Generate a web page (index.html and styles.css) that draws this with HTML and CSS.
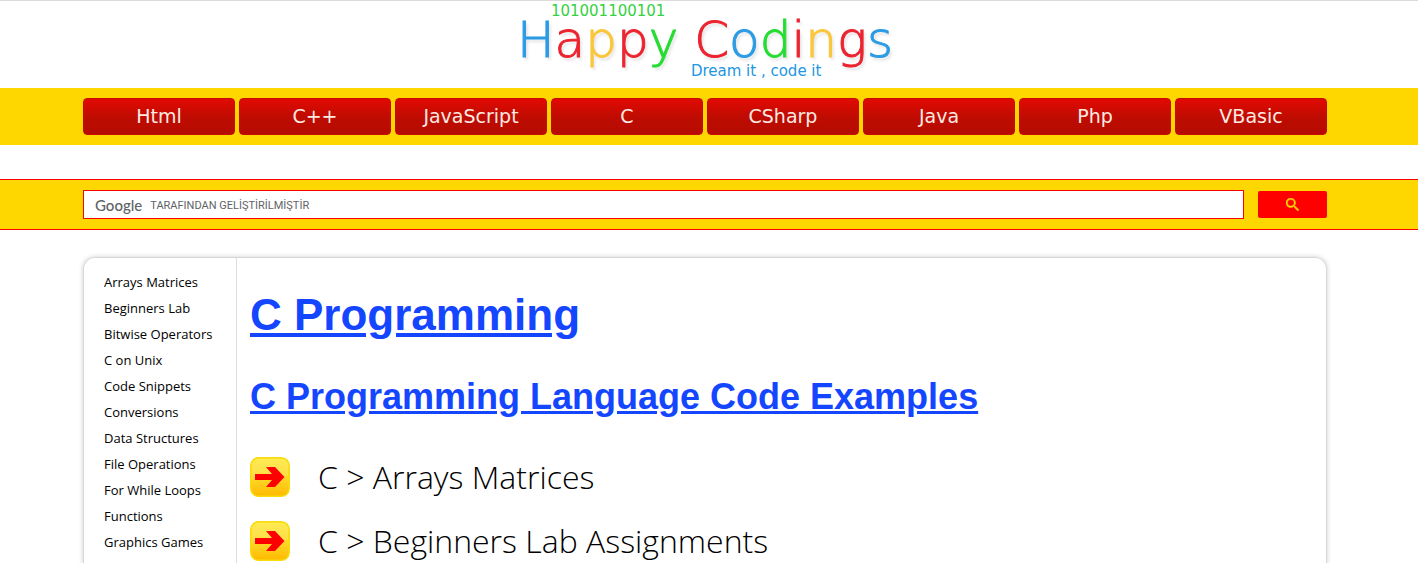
FILE: index.html
```html
<!DOCTYPE html>
<html lang="en">
<head>
<meta charset="utf-8">
<title>C Programming - Happy Codings</title>
<link rel="stylesheet" href="styles.css">
</head>
<body>
<header class="header">
  <a class="logo" href="#">
    <span class="logo-bits">101001100101</span>
    <span class="logo-name"><span class="blue">H</span><span class="red">a</span><span class="yellow">p</span><span class="red">p</span><span class="green">y</span> <span class="red">C</span><span class="blue">o</span><span class="green">d</span><span class="red">i</span><span class="yellow">n</span><span class="red">g</span><span class="blue">s</span></span>
    <span class="logo-tag">Dream it , code it</span>
  </a>
</header>
<nav class="nav">
  <a class="tab" href="#">Html</a>
  <a class="tab" href="#">C++</a>
  <a class="tab" href="#">JavaScript</a>
  <a class="tab" href="#">C</a>
  <a class="tab" href="#">CSharp</a>
  <a class="tab" href="#">Java</a>
  <a class="tab" href="#">Php</a>
  <a class="tab" href="#">VBasic</a>
</nav>
<form class="search">
  <label class="field">
    <span class="brand">Google</span>
    <input class="query" type="text" aria-label="Search" placeholder="TARAFINDAN GELİŞTİRİLMİŞTİR">
  </label>
  <button class="go" type="button" aria-label="Search">
    <svg width="13" height="13" viewBox="0 0 13 13"><path d="M4.800 0a4.800 4.800 0 1 0 3 8.500l.6.6v.6L11.900 13l1.100-1.100L9.700 8.400h-.6l-.6-.6A4.800 4.800 0 0 0 4.800 0zm0 1.500a3.300 3.300 0 1 1 0 6.600 3.300 3.300 0 0 1 0-6.600z" fill="#ffd700" stroke="#ffd700" stroke-width=".4"/></svg>
  </button>
</form>
<div class="card">
  <aside class="sidebar">
    <a href="#">Arrays Matrices</a>
    <a href="#">Beginners Lab</a>
    <a href="#">Bitwise Operators</a>
    <a href="#">C on Unix</a>
    <a href="#">Code Snippets</a>
    <a href="#">Conversions</a>
    <a href="#">Data Structures</a>
    <a href="#">File Operations</a>
    <a href="#">For While Loops</a>
    <a href="#">Functions</a>
    <a href="#">Graphics Games</a>
  </aside>
  <main class="content">
    <h1><a href="#">C Programming</a></h1>
    <h2><a href="#">C Programming Language Code Examples</a></h2>
    <ul class="topics">
      <li><svg class="arrow" viewBox="0 0 40 40"><use href="#arrow"/></svg><a href="#">C &gt; Arrays Matrices</a></li>
      <li><svg class="arrow" viewBox="0 0 40 40"><use href="#arrow"/></svg><a href="#">C &gt; Beginners Lab Assignments</a></li>
    </ul>
  </main>
</div>
<svg class="defs" width="0" height="0">
  <defs>
    <linearGradient id="gold" x1="0" y1="0" x2="0" y2="1"><stop offset="0" stop-color="#ffe83c"/><stop offset=".5" stop-color="#ffd92a"/><stop offset="1" stop-color="#ffb900"/></linearGradient>
    <symbol id="arrow" viewBox="0 0 40 40">
      <rect x=".7" y=".7" width="38.600" height="38.600" rx="8" fill="url(#gold)" stroke="#f7dc0c" stroke-width="1.400"/>
      <path d="M2 9a7 7 0 0 1 7-7h22a7 7 0 0 1 7 7v10q-18-2-36 2z" fill="#fff" opacity=".13"/>
      <path d="M5 17h17l-6-7h9l9.500 10L25 30h-9l6-7H5z" fill="#f00"/>
    </symbol>
  </defs>
</svg>
</body>
</html>
```
FILE: styles.css
```css
* { box-sizing: border-box; }
body {
  margin: 0;
  background: #fff;
  color: #000;
  font-family: "Open Sans", "Noto Sans", sans-serif;
  overflow: hidden;
  height: 100vh;
}
a { color: inherit; text-decoration: none; }
.header, .nav, .search { padding: 0 91px 0 83px; }
.header {
  display: flex;
  justify-content: center;
  height: 88px;
  border-top: 1px solid #dadada;
}
.logo {
  display: flex;
  flex-direction: column;
  font-family: "DejaVu Sans", sans-serif;
  white-space: nowrap;
}
.logo-bits {
  padding: 2px 0 0 34px;
  font-size: 15px;
  line-height: 16px;
  color: #35d13f;
}
.logo-name {
  font-size: 50px;
  line-height: 42px;
  font-weight: 200;
  -webkit-text-stroke: 1px;
  text-shadow: 2px 3px 3px #0002;
}
.blue { color: #2c9be4; }
.red { color: #ec2430; }
.yellow { color: #fac63c; }
.green { color: #26dc32; }
.logo-tag {
  padding: 2px 0 0 174px;
  font-size: 15px;
  line-height: 16px;
  color: #2196e3;
}
.nav {
  display: grid;
  grid-template-columns: repeat(8, 1fr);
  gap: 4px;
  padding-top: 10px;
  padding-bottom: 10px;
  background: #ffd700;
}
.tab {
  height: 37px;
  border: 1px solid #c90a03;
  border-radius: 4px;
  background: linear-gradient(#e20a02, #bd0c02 55%, #b60b00);
  color: #ffe9e3;
  font: 19px/34px "DejaVu Sans", sans-serif;
  text-align: center;
}
.search {
  display: flex;
  align-items: center;
  gap: 14px;
  height: 51px;
  margin-top: 34px;
  border: solid #f00;
  border-width: 1px 0;
  background: #ffd700;
}
.field {
  display: flex;
  align-items: center;
  flex: 1;
  gap: 8px;
  height: 29px;
  padding-left: 11px;
  border: 1px solid #f00;
  background: #fff;
}
.brand {
  color: #5f6368;
  font: 500 15px/24px Lato, sans-serif;
}
.query {
  flex: 1;
  padding: 2px 0 0;
  border: 0;
  outline: 0;
  background: none;
  font: 11px/24px Roboto, sans-serif;
}
.query::placeholder { color: #5f6368; opacity: 1; }
.go {
  display: flex;
  align-items: center;
  justify-content: center;
  width: 69px;
  height: 27px;
  padding: 0;
  border: 0;
  border-radius: 2px;
  background: #f00;
}
.card {
  display: flex;
  margin: 27px 91px 0 83px;
  border: 1px solid #d8d8d8;
  border-bottom: 0;
  border-radius: 12px 12px 0 0;
  box-shadow: 0 0 5px #0003;
}
.sidebar {
  display: flex;
  flex-direction: column;
  width: 153px;
  padding: 11px 0 8px 20px;
  border-right: 1px solid #ddd;
  font-size: 13px;
  line-height: 26px;
  white-space: nowrap;
}
.content { flex: 1; padding: 31px 13px 0; }
h1, h2 {
  margin: 0;
  color: #1546ff;
  font-family: "Liberation Sans", Arial, sans-serif;
}
h1 { font-size: 44px; line-height: 52px; }
h2 { margin-top: 32px; font-size: 36px; line-height: 48px; }
h1 a, h2 a { text-decoration: underline; }
.topics {
  display: grid;
  gap: 16px;
  margin: 32px 0 0;
  padding: 0;
  list-style: none;
  font-size: 32px;
  line-height: 48px;
  font-weight: 300;
}
.topics li { display: flex; align-items: center; gap: 28px; }
.arrow { width: 40px; height: 40px; }
.defs { position: absolute; }
```
